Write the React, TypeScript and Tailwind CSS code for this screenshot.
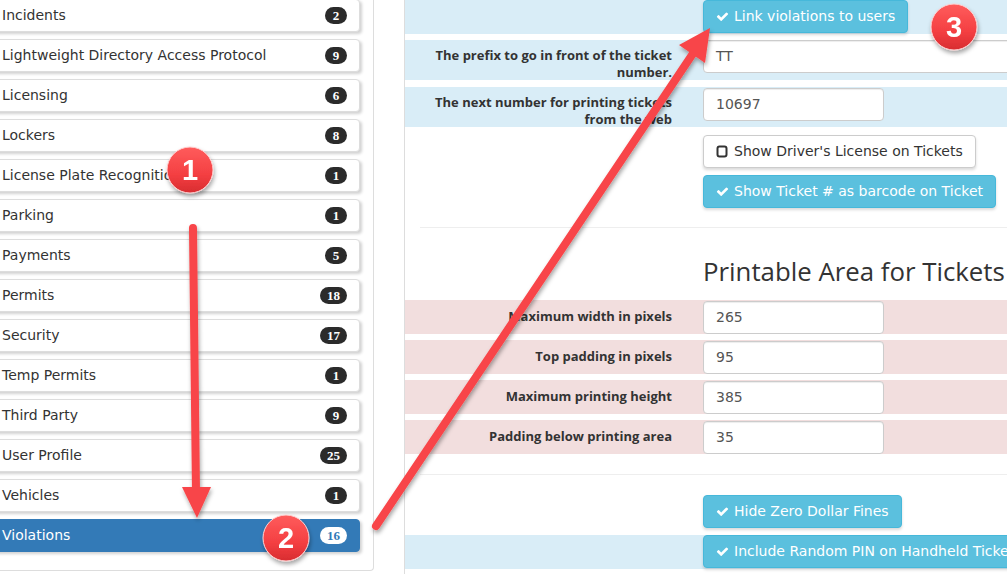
import { Fragment } from 'react'

const items = [
  { name: 'Incidents', count: 2 },
  { name: 'Lightweight Directory Access Protocol', count: 9 },
  { name: 'Licensing', count: 6 },
  { name: 'Lockers', count: 8 },
  { name: 'License Plate Recognition', count: 1 },
  { name: 'Parking', count: 1 },
  { name: 'Payments', count: 5 },
  { name: 'Permits', count: 18 },
  { name: 'Security', count: 17 },
  { name: 'Temp Permits', count: 1 },
  { name: 'Third Party', count: 9 },
  { name: 'User Profile', count: 25 },
  { name: 'Vehicles', count: 1 },
  { name: 'Violations', count: 16, active: true },
]

const sizes = [
  { label: 'Maximum width in pixels', value: '265' },
  { label: 'Top padding in pixels', value: '95' },
  { label: 'Maximum printing height', value: '385' },
  { label: 'Padding below printing area', value: '35' },
]

const body = { fontFamily: '"DejaVu Sans", Verdana, sans-serif' }

function Check() {
  return (
    <svg width="13" height="13" viewBox="0 0 1792 1792" className="mr-[5px] shrink-0">
      <path
        fill="currentColor"
        d="M1671 566q0 40-28 68l-724 724-136 136q-28 28-68 28t-68-28l-136-136-362-362q-28-28-28-68t28-68l136-136q28-28 68-28t68 28l294 295 656-657q28-28 68-28t68 28l136 136q28 28 28 68z"
      />
    </svg>
  )
}

function SquareO() {
  return (
    <svg width="12" height="13" viewBox="0 0 12 13" className="mr-[6px] shrink-0">
      <rect x="1.5" y="1.5" width="9" height="10" rx="2" fill="none" stroke="#333" strokeWidth="2" />
    </svg>
  )
}

function InfoButton({ children }: { children: string }) {
  return (
    <button
      className="flex h-[33px] shrink-0 items-center whitespace-nowrap rounded-[4px] border border-[#46b8da] bg-[#5bc0de] px-[12px] text-[14px] text-white shadow-[0_2px_3px_rgba(0,0,0,0.15)]"
      style={body}
    >
      <Check />
      {children}
    </button>
  )
}

function Field({ value, wide }: { value: string; wide?: boolean }) {
  return (
    <div
      className={`flex h-[33px] shrink-0 items-center rounded-[4px] border border-[#ccc] bg-white px-[12px] text-[14px] text-[#555] shadow-[inset_0_1px_1px_rgba(0,0,0,0.075)] ${wide ? 'w-[400px]' : 'w-[181px]'}`}
      style={body}
    >
      {value}
    </div>
  )
}

function Label({ children, pt }: { children: React.ReactNode; pt: string }) {
  return (
    <div className={`w-[283px] shrink-0 pl-[15px] pr-[16px] text-right text-[13px] font-bold leading-[17px] text-[#333] ${pt}`}>
      {children}
    </div>
  )
}

function Badge({ count, active }: { count: number; active?: boolean }) {
  return (
    <span
      className={`flex h-[17px] min-w-[22px] items-center justify-center rounded-full px-[7px] text-[13px] font-bold leading-none ${active ? 'bg-white text-[#337ab7]' : 'bg-[#2b2b2b] text-white'}`}
      style={{ fontFamily: '"Liberation Serif", serif' }}
    >
      {count}
    </span>
  )
}

function Annotations() {
  const circles = [
    { cx: 190, cy: 170, n: '1' },
    { cx: 286, cy: 538, n: '2' },
    { cx: 954, cy: 27, n: '3' },
  ]
  return (
    <svg className="pointer-events-none absolute left-0 top-0" width="1007" height="574" viewBox="0 0 1007 574">
      <defs>
        <filter id="sh" x="-30%" y="-30%" width="160%" height="160%">
          <feDropShadow dx="1" dy="3" stdDeviation="2" floodColor="#000" floodOpacity="0.35" />
        </filter>
        <linearGradient id="cg" x1="0" y1="0" x2="0" y2="1">
          <stop offset="0" stopColor="#ff5c5c" />
          <stop offset="0.6" stopColor="#f43f42" />
          <stop offset="1" stopColor="#d82c30" />
        </linearGradient>
      </defs>
      <g filter="url(#sh)" fill="#f84548" stroke="#f84548">
        <line x1="193" y1="228" x2="196" y2="492" strokeWidth="8" strokeLinecap="round" />
        <polygon points="182,487 211,487 197,518" stroke="none" />
        <line x1="376" y1="526" x2="694" y2="52" strokeWidth="8" strokeLinecap="round" />
        <polygon points="679,45 705,63 710,28" stroke="none" />
      </g>
      {circles.map((c) => (
        <g key={c.n} filter="url(#sh)">
          <circle cx={c.cx} cy={c.cy} r="23" fill="url(#cg)" stroke="#ffd0d0" strokeWidth="1" />
          <text
            x={c.cx}
            y={c.cy + 10}
            textAnchor="middle"
            fill="#fff"
            fontSize="29"
            fontWeight="bold"
            fontFamily='"Liberation Sans", Arial, sans-serif'
          >
            {c.n}
          </text>
        </g>
      ))}
    </svg>
  )
}

export default function App() {
  return (
    <div
      className="relative h-[574px] w-[1007px] overflow-hidden bg-white text-[#333]"
      style={{ fontFamily: '"Open Sans", "Liberation Sans", sans-serif' }}
    >
      <div className="flex h-full">
        {/* left list */}
        <div className="w-[374px] shrink-0 self-start" style={body}>
          <div className="-mt-px flex flex-col gap-[7px] rounded-br-[4px] border-b border-r border-[#ddd] pb-[18px] pr-[13px]">
            {items.map((it) => (
              <div
                key={it.name}
                className={`-ml-[14px] flex h-[33px] items-center justify-between rounded-[4px] border pl-[15px] pr-[12px] text-[14px] shadow-[2px_2px_3px_rgba(0,0,0,0.18)] ${it.active ? 'border-[#337ab7] bg-[#337ab7] text-white' : 'border-[#ddd] bg-white text-[#333]'}`}
              >
                <span className="whitespace-nowrap">{it.name}</span>
                <Badge count={it.count} active={it.active} />
              </div>
            ))}
          </div>
        </div>

        {/* settings */}
        <div className="ml-[30px] min-w-0 flex-1 overflow-hidden border-l border-[#ddd]">
          <div className="flex h-[34px] bg-[#d9edf7]">
            <div className="w-[283px] shrink-0" />
            <div className="pl-[15px]">
              <InfoButton>Link violations to users</InfoButton>
            </div>
          </div>

          <div className="mt-[6px] flex h-[40px] bg-[#d9edf7]">
            <Label pt="pt-[7px]">The prefix to go in front of the ticket number.</Label>
            <div className="pl-[15px]">
              <Field value="TT" wide />
            </div>
          </div>

          <div className="mt-[7px] flex h-[40px] bg-[#d9edf7]">
            <Label pt="pt-[7px]">The next number for printing tickets from the web</Label>
            <div className="pl-[15px] pt-px">
              <Field value="10697" />
            </div>
          </div>

          <div className="flex pt-[8px]">
            <div className="w-[283px] shrink-0" />
            <div className="flex flex-col items-start gap-[7px] pl-[15px]">
              <button
                className="flex h-[33px] items-center whitespace-nowrap rounded-[4px] border border-[#ccc] bg-white px-[12px] text-[14px] text-[#333] shadow-[0_2px_3px_rgba(0,0,0,0.15)]"
                style={body}
              >
                <SquareO />
                Show Driver's License on Tickets
              </button>
              <InfoButton>Show Ticket # as barcode on Ticket</InfoButton>
            </div>
          </div>

          <hr className="ml-[15px] mt-[19px] border-t border-[#eee]" />

          <div className="mt-[29px] flex h-[28px] items-center">
            <div className="w-[283px] shrink-0" />
            <h3 className="whitespace-nowrap pl-[15px] text-[25.8px] font-normal leading-[28px] text-[#333]">
              Printable Area for Tickets
            </h3>
          </div>

          <div className="mt-[15px] flex flex-col gap-[6px]">
            {sizes.map((s) => (
              <Fragment key={s.label}>
                <div className="flex h-[34px] bg-[#f2dede]">
                  <Label pt="pt-[8px]">{s.label}</Label>
                  <div className="pl-[15px] pt-px">
                    <Field value={s.value} />
                  </div>
                </div>
              </Fragment>
            ))}
          </div>

          <hr className="ml-[15px] mt-[20px] border-t border-[#eee]" />

          <div className="mt-[20px] flex">
            <div className="w-[283px] shrink-0" />
            <div className="pl-[15px]">
              <InfoButton>Hide Zero Dollar Fines</InfoButton>
            </div>
          </div>

          <div className="mt-[7px] flex h-[34px] bg-[#d9edf7]">
            <div className="w-[283px] shrink-0" />
            <div className="pl-[15px]">
              <InfoButton>Include Random PIN on Handheld Tickets</InfoButton>
            </div>
          </div>
        </div>
      </div>

      <Annotations />
    </div>
  )
}
